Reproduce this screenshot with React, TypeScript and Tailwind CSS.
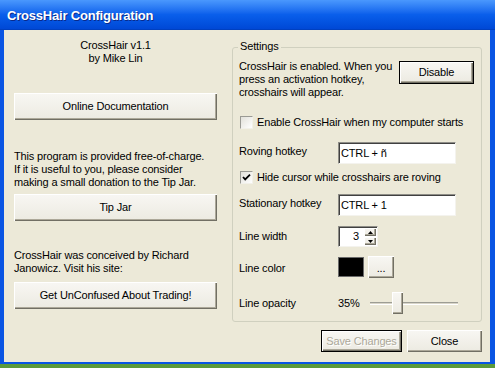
import React from "react";

const btn =
  "flex items-center justify-center bg-linear-to-b from-[#F8F7F3] to-[#ECEAE1] shadow-[inset_1px_1px_0_#ffffff,inset_-1px_-1px_0_#716f64,inset_-2px_-2px_0_#aca899]";
const defBtn =
  "flex items-center justify-center border border-black bg-linear-to-b from-[#F8F7F3] to-[#ECEAE1] shadow-[inset_1px_1px_0_#ffffff,inset_-1px_-1px_0_#716f64,inset_-2px_-2px_0_#aca899]";
const sunken =
  "bg-white border-t border-l border-t-[#8E8D87] border-l-[#8E8D87] border-b border-r border-b-[#F4F3EE] border-r-[#F4F3EE] shadow-[inset_1px_1px_0_#404040]";

function Checkbox({ checked }: { checked?: boolean }) {
  return (
    <div className="w-[13px] h-[13px] ml-[1px] border border-t-[#9A9A94] border-l-[#9A9A94] border-b-[#F2F1EA] border-r-[#F2F1EA] bg-linear-to-br from-[#E2E1DA] to-white flex items-center justify-center">
      {checked && (
        <svg width="9" height="9" viewBox="0 0 9 9">
          <path d="M1 4 L3.2 6.4 L8 1.6" stroke="#000" strokeWidth="1.8" fill="none" />
        </svg>
      )}
    </div>
  );
}

export default function App() {
  return (
    <div className="w-[495px] h-[368px] overflow-hidden bg-linear-to-b from-[#3E7F2A] to-[#5C9A3C] font-['Liberation_Sans',Arial,sans-serif] text-[11px] leading-[13px] tracking-[-0.15px] text-black">
      <div className="h-[364px] flex flex-col">
        {/* Title bar */}
        <div className="h-[30px] flex items-center pl-[7px] pt-[2px] bg-linear-to-b from-[#4A98FD] via-[#0A5FEB] to-[#0048D6] border-b border-[#0040C0]">
          <span className="text-white font-bold text-[13px] tracking-[-0.2px] [text-shadow:1px_1px_0_#0A2A8A]">
            CrossHair Configuration
          </span>
        </div>
        {/* Client */}
        <div className="h-[334px] flex bg-[#ECE9D8] border-l-[4px] border-r-[5px] border-b-[2px] border-[#0A55E3]">
          {/* Left column */}
          <div className="ml-[10px] w-[203px] pt-[9px] flex flex-col">
            <div className="text-center">
              <div>CrossHair v1.1</div>
              <div>by Mike Lin</div>
            </div>
            <div className={`${btn} mt-[28px] h-[27px]`}>Online Documentation</div>
            <div className="mt-[30px]">
              <div>This program is provided free-of-charge.</div>
              <div>If it is useful to you, please consider</div>
              <div>making a small donation to the Tip Jar.</div>
            </div>
            <div className={`${btn} mt-[5px] h-[27px]`}>Tip Jar</div>
            <div className="mt-[28px]">
              <div>CrossHair was conceived by Richard</div>
              <div>Janowicz. Visit his site:</div>
            </div>
            <div className={`${btn} mt-[7px] h-[27px]`}>Get UnConfused About Trading!</div>
          </div>

          {/* Right column */}
          <div className="ml-[15px] w-[250px] flex flex-col">
            <div className="mt-[17px] h-[275px] border border-[#D0D0BF] rounded-[3px] flex flex-col">
              <span className="-mt-[8px] ml-[5px] px-[2px] self-start bg-[#ECE9D8]">Settings</span>
              <div className="pl-[6px] pr-[7px] flex flex-col">
                <div className="mt-[7px] flex justify-between items-start">
                  <div>
                    <div>CrossHair is enabled. When you</div>
                    <div>press an activation hotkey,</div>
                    <div>crosshairs will appear.</div>
                  </div>
                  <div className={`${defBtn} mt-[1px] w-[75px] h-[23px]`}>Disable</div>
                </div>

                <div className="mt-[17px] h-[13px] flex items-center gap-[4px]">
                  <Checkbox />
                  <span>Enable CrossHair when my computer starts</span>
                </div>

                <div className="mt-[13px] h-[22px] flex items-start">
                  <span className="w-[99px] pt-[3px]">Roving hotkey</span>
                  <div className={`${sunken} w-[118px] h-[22px] flex items-center pl-[2px]`}>CTRL + ñ</div>
                </div>

                <div className="mt-[7px] h-[13px] flex items-center gap-[4px]">
                  <Checkbox checked />
                  <span>Hide cursor while crosshairs are roving</span>
                </div>

                <div className="mt-[10px] h-[22px] flex items-start">
                  <span className="w-[99px] pt-[3px]">Stationary hotkey</span>
                  <div className={`${sunken} w-[118px] h-[22px] flex items-center pl-[2px]`}>CTRL + 1</div>
                </div>

                <div className="mt-[10px] h-[21px] flex items-center">
                  <span className="w-[99px]">Line width</span>
                  <div className={`${sunken} w-[40px] h-[21px] flex`}>
                    <div className="flex-1 flex items-center justify-end pr-[5px]">3</div>
                    <div className="w-[13px] flex flex-col gap-[1px] py-[1px] pr-[1px]">
                      <div className={`${btn} h-[8px]`}>
                        <svg width="5" height="3" viewBox="0 0 5 3"><path d="M2.5 0 L5 3 L0 3 Z" fill="#000" /></svg>
                      </div>
                      <div className={`${btn} h-[8px]`}>
                        <svg width="5" height="3" viewBox="0 0 5 3"><path d="M0 0 L5 0 L2.5 3 Z" fill="#000" /></svg>
                      </div>
                    </div>
                  </div>
                </div>

                <div className="mt-[9px] h-[22px] flex items-center">
                  <span className="w-[99px] pt-[2px]">Line color</span>
                  <div className="w-[26px] h-[20px] bg-black border border-[#6a6a6a]" />
                  <div className={`${btn} ml-[4px] w-[26px] h-[22px] pt-[2px]`}>...</div>
                </div>

                <div className="mt-[14px] h-[22px] flex items-center">
                  <span className="w-[99px]">Line opacity</span>
                  <span className="w-[32px]">35%</span>
                  <div className="relative w-[88px] h-[22px] flex items-center">
                    <div className="w-full h-[3px] border-t border-t-[#9D9D94] border-b border-b-white bg-[#D8D5C8]" />
                    <div className={`${btn} absolute left-[22px] top-0 w-[11px] h-[22px]`} />
                  </div>
                </div>
              </div>
            </div>

            <div className="mt-[8px] flex justify-end gap-[5px]">
              <div className={`${defBtn} w-[81px] h-[22px] text-[#ACA899] [text-shadow:1px_1px_0_#ffffff]`}>Save Changes</div>
              <div className={`${btn} w-[75px] h-[22px]`}>Close</div>
            </div>
          </div>
        </div>
      </div>
    </div>
  );
}
